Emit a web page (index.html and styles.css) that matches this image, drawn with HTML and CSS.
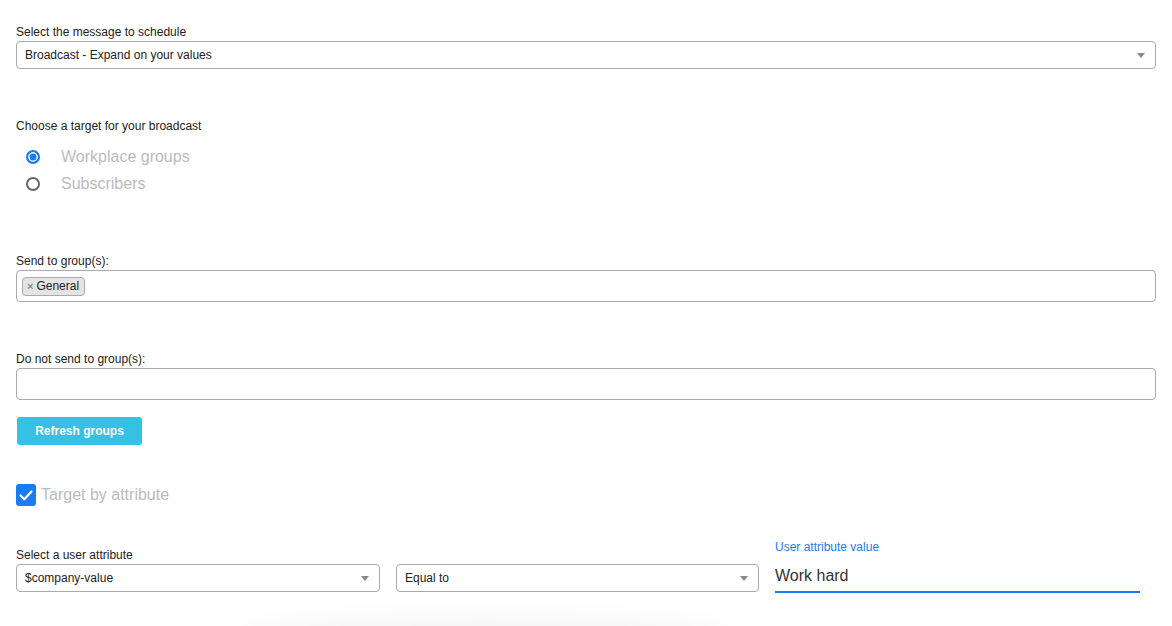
FILE: index.html
```html
<!DOCTYPE html>
<html>
<head>
<meta charset="utf-8">
<link rel="stylesheet" href="styles.css">
</head>
<body>
<div class="form">
  <div class="field">
    <label class="lbl">Select the message to schedule</label>
    <div class="select">
      <span>Broadcast - Expand on your values</span>
      <span class="arrow"></span>
    </div>
  </div>

  <div class="field target">
    <label class="lbl">Choose a target for your broadcast</label>
    <div class="radios">
      <div class="radio-row"><span class="radio on"></span><span class="rlabel">Workplace groups</span></div>
      <div class="radio-row"><span class="radio"></span><span class="rlabel">Subscribers</span></div>
    </div>
  </div>

  <div class="field groups">
    <label class="lbl">Send to group(s):</label>
    <div class="multi">
      <span class="chip"><span class="x">×</span>General</span>
    </div>
  </div>

  <div class="field nogroups">
    <label class="lbl">Do not send to group(s):</label>
    <div class="multi"></div>
  </div>

  <button class="btn">Refresh groups</button>

  <div class="check-row">
    <span class="check">
      <svg width="20" height="22" viewBox="0 0 20 22"><path d="M4.5 11.5 L8.3 15.2 L15.5 7.5" fill="none" stroke="#fff" stroke-width="2.2" stroke-linecap="round" stroke-linejoin="round"/></svg>
    </span>
    <span class="clabel">Target by attribute</span>
  </div>

  <div class="attr-row">
    <div class="col c1">
      <label class="lbl">Select a user attribute</label>
      <div class="select"><span>$company-value</span><span class="arrow"></span></div>
    </div>
    <div class="col c2">
      <div class="select"><span>Equal to</span><span class="arrow"></span></div>
    </div>
    <div class="col value">
      <label class="vlbl">User attribute value</label>
      <div class="vinput">Work hard</div>
    </div>
  </div>
</div>
<div class="shade"></div>
</body>
</html>
```

FILE: styles.css
```css
html, body {
  margin: 0;
  padding: 0;
  background: #fff;
  height: 626px;
  overflow: hidden;
}
body {
  font-family: "Liberation Sans", Arial, Helvetica, sans-serif;
  color: #222;
  position: relative;
}
.form {
  padding: 25px 16px 0 16px;
  width: 1140px;
}
.field { display: flex; flex-direction: column; }
.lbl {
  font-size: 12px;
  line-height: 14px;
  color: #222;
  margin-bottom: 2px;
}
.select {
  height: 26px;
  border: 1px solid #aaa;
  border-radius: 4px;
  display: flex;
  align-items: center;
  justify-content: space-between;
  padding: 0 8px 0 8px;
  font-size: 12px;
  color: #222;
}
.arrow {
  width: 0; height: 0;
  border-left: 4px solid transparent;
  border-right: 4px solid transparent;
  border-top: 5px solid #888;
  margin-right: 2px;
}
.target { margin-top: 50px; }
.radios { margin-top: 8px; padding-left: 10px; }
.radio-row { display: flex; align-items: center; height: 27px; }
.radio {
  width: 10px; height: 10px;
  border: 2px solid #666;
  border-radius: 50%;
  box-sizing: content-box;
  margin-right: 21px;
}
.radio.on {
  border-color: #1a7cf2;
  background: #1a7cf2;
  box-shadow: inset 0 0 0 1.5px #fff;
}
.rlabel { font-size: 16px; color: #bbb; }
.groups { margin-top: 57px; }
.multi {
  height: 30px;
  border: 1px solid #aaa;
  border-radius: 4px;
  display: flex;
  align-items: center;
  padding: 0 5px;
}
.chip {
  display: inline-flex;
  align-items: center;
  height: 17px;
  padding: 0 5px 0 4px;
  border: 1px solid #aaa;
  border-radius: 4px;
  background: #e4e4e4;
  font-size: 12px;
  color: #222;
}
.chip .x { color: #888; font-size: 11px; margin-right: 3px; font-weight: bold; }
.nogroups { margin-top: 50px; }
.btn {
  margin-top: 17px;
  margin-left: 1px;
  width: 125px;
  height: 28px;
  border: none;
  border-radius: 3px;
  background: #35c1e3;
  color: #fff;
  font-family: "Liberation Sans", Arial, sans-serif;
  font-weight: bold;
  font-size: 12px;
  padding: 0;
  display: block;
}
.check-row { display: flex; align-items: center; margin-top: 39px; }
.check {
  width: 20px; height: 22px;
  border-radius: 3px;
  background: #1a7cf2;
  display: flex;
  margin-right: 5px;
}
.clabel { font-size: 16px; color: #bbb; }
.attr-row {
  display: flex;
  align-items: flex-end;
  gap: 16px;
  margin-top: 34px;
}
.col { display: flex; flex-direction: column; }
.c1 { width: 364px; }
.c2 { width: 363px; }
.value { width: 365px; margin-bottom: -1px; }
.vlbl { font-size: 12px; color: #1a7cf2; line-height: 14px; margin-bottom: 13px; }
.vinput {
  font-size: 16px;
  color: #333;
  padding-bottom: 6px;
  border-bottom: 2px solid #1a7cf2;
  line-height: 18px;
}
.shade {
  position: absolute;
  left: 240px;
  width: 490px;
  top: 626px;
  height: 30px;
  border-radius: 50%;
  box-shadow: 0 0 30px 6px rgba(0,0,0,0.05);
}
```
